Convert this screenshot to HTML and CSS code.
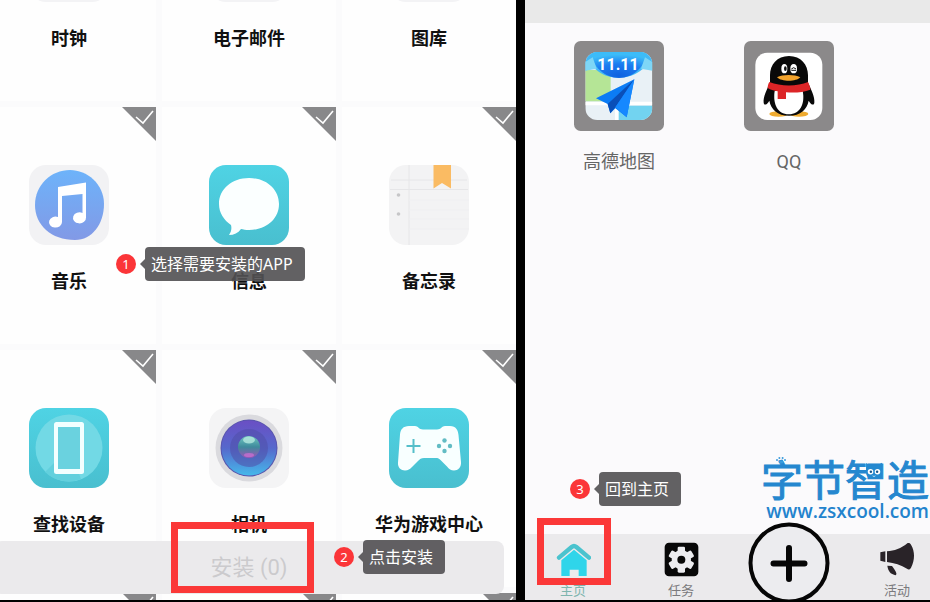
FILE: index.html
```html
<!DOCTYPE html>
<html lang="zh-CN">
<head>
<meta charset="utf-8">
<title>安装应用</title>
<link rel="stylesheet" href="styles.css">
</head>
<body>
<svg class="defs" aria-hidden="true">
  <defs>
    <linearGradient id="blue" x1="0" y1="0" x2="0" y2="1"><stop offset="0" stop-color="#6db3fa"/><stop offset="1" stop-color="#8299e6"/></linearGradient>
    <linearGradient id="teal" x1="0" y1="0" x2="0" y2="1"><stop offset="0" stop-color="#4fd3e4"/><stop offset="1" stop-color="#49bfcf"/></linearGradient>
    <linearGradient id="lens" x1="0" y1="0" x2="0" y2="1"><stop offset="0" stop-color="#6a4fc4"/><stop offset=".5" stop-color="#5668cc"/><stop offset="1" stop-color="#45b8ea"/></linearGradient>
    <linearGradient id="iris" x1="0" y1="0" x2="0" y2="1"><stop offset="0" stop-color="#6fc8c0"/><stop offset=".5" stop-color="#3f8a9c"/><stop offset="1" stop-color="#9a55b8"/></linearGradient>
    <radialGradient id="sky" cx=".5" cy=".9" r=".8"><stop offset="0" stop-color="#0f62e0"/><stop offset=".55" stop-color="#1c7cf0"/><stop offset="1" stop-color="#3cbcf8"/></radialGradient>
    <symbol id="check" viewBox="0 0 34 34"><path d="M14 10l7 6L31 4" fill="none" stroke="#fff" stroke-width="1.6"/></symbol>
    <clipPath id="mapclip"><rect x="46" y="51" width="201" height="204" rx="36"/></clipPath>
  </defs>
</svg>

<main class="stage">
  <section class="picker">
    <div class="grid">
      <label class="app"><span class="mark"><input type="checkbox"><svg><use href="#check"/></svg></span><svg class="icon" viewBox="0 0 80 80"><rect width="80" height="80" rx="17" fill="#f3f3f5"/></svg><span>时钟</span></label>
      <label class="app"><span class="mark"><input type="checkbox"><svg><use href="#check"/></svg></span><svg class="icon" viewBox="0 0 80 80"><rect width="80" height="80" rx="17" fill="#f3f3f5"/></svg><span>电子邮件</span></label>
      <label class="app"><span class="mark"><input type="checkbox"><svg><use href="#check"/></svg></span><svg class="icon" viewBox="0 0 80 80"><rect width="80" height="80" rx="17" fill="#f3f3f5"/></svg><span>图库</span></label>

      <label class="app"><span class="mark"><input type="checkbox"><svg><use href="#check"/></svg></span>
        <svg class="icon" viewBox="0 0 80 80"><rect width="80" height="80" rx="17" fill="#f2f2f4"/><path d="M41 5c17 0 34 14 34 34 0 20-12 36-29 36C22 75 6 60 6 40 6 20 22 5 41 5z" fill="url(#blue)"/><path d="M29 22l28-4.500v35a6.500 5.500 0 1 1-3.500-4.500V29L33 31v26a6.500 5.500 0 1 1-4-5z" fill="#fff"/></svg>
        <span>音乐</span></label>
      <label class="app"><span class="mark"><input type="checkbox"><svg><use href="#check"/></svg></span>
        <svg class="icon" viewBox="0 0 80 80"><rect width="80" height="80" rx="17" fill="url(#teal)"/><path d="M40 13c17 0 30 11 30 26S57 65 40 65c-3 0-6-.5-8-1-3 4-7 6-12 6 2-3 3-6 2-10C15 55 10 48 10 39c0-15 13-26 30-26z" fill="#fbffff"/></svg>
        <span>信息</span></label>
      <label class="app"><span class="mark"><input type="checkbox"><svg><use href="#check"/></svg></span>
        <svg class="icon" viewBox="0 0 80 80"><rect width="80" height="80" rx="17" fill="#f3f3f4"/><path d="M20 0v80M2 15h76M1 24.500h78" stroke="#e6e6e8" fill="none"/><path d="M20 35h60M20 45h60M20 54h60M20 64h60" stroke="#efeff1" fill="none"/><circle cx="9.500" cy="30" r="1.800" fill="#c6c6c8"/><circle cx="9.500" cy="49" r="1.800" fill="#c6c6c8"/><path d="M44.500 0H62v23.500L53 18l-8.500 5.500z" fill="#fabb63"/></svg>
        <span>备忘录</span></label>

      <label class="app"><span class="mark"><input type="checkbox"><svg><use href="#check"/></svg></span>
        <svg class="icon" viewBox="0 0 80 80"><rect width="80" height="80" rx="17" fill="url(#teal)"/><circle cx="40" cy="40" r="33.500" fill="#72d9e5"/><path d="M40 40L16 64a33.500 33.500 0 0 0 36 7z" fill="#62d0dd"/><rect x="25" y="14" width="30" height="52" rx="2.500" fill="#f3ffff"/><rect x="29" y="19" width="22" height="42" fill="#6ad2df"/></svg>
        <span>查找设备</span></label>
      <label class="app"><span class="mark"><input type="checkbox"><svg><use href="#check"/></svg></span>
        <svg class="icon" viewBox="0 0 80 80"><rect width="80" height="80" rx="17" fill="#f4f4f5"/><circle cx="40" cy="40" r="33.500" fill="#dadade"/><circle cx="40" cy="40" r="28.500" fill="#5855ad"/><circle cx="40" cy="40" r="27.500" fill="url(#lens)"/><circle cx="40" cy="40" r="19" fill="#504fa8" opacity=".55"/><circle cx="40" cy="39" r="11" fill="url(#iris)"/><ellipse cx="40" cy="32" rx="6" ry="3.500" fill="#b5e9df" opacity=".8"/><ellipse cx="40" cy="47" rx="5" ry="2" fill="#c66fd0" opacity=".8"/></svg>
        <span>相机</span></label>
      <label class="app"><span class="mark"><input type="checkbox"><svg><use href="#check"/></svg></span>
        <svg class="icon" viewBox="0 0 80 80"><rect width="80" height="80" rx="17" fill="url(#teal)"/><path d="M20 18h6c3 0 4 3.500 8 3.500h14c4 0 5-3.500 8-3.500h5c6 0 8 4 8.500 9l2.500 27c.5 5-3 8.500-7 8.500-3 0-5-1.500-7-4l-6-6c-2-2-3-2.500-5-2.500H35c-3 0-4 1-6 3l-6 6c-2 2-4 3.500-7 3.500-4 0-7.500-3-7-8l2-28c.5-5 3-8.500 9-8.500z" fill="#f8ffff"/><path d="M24.500 31v14M17.500 38h14" stroke="#55bfca" stroke-width="2"/><g fill="#62bcc4"><circle cx="55.500" cy="32.500" r="2.200"/><circle cx="55.500" cy="43" r="2.200"/><circle cx="50" cy="38" r="2.200"/><circle cx="61" cy="38" r="2.200"/></g></svg>
        <span>华为游戏中心</span></label>

      <label class="app"><span class="mark"><input type="checkbox" aria-label="应用"><svg><use href="#check"/></svg></span></label>
      <label class="app"><span class="mark"><input type="checkbox" aria-label="应用"><svg><use href="#check"/></svg></span></label>
      <label class="app"><span class="mark"><input type="checkbox" aria-label="应用"><svg><use href="#check"/></svg></span></label>
    </div>
    <button class="install" type="button">安装 (0)</button>
    <div class="frame frame-install"></div>
    <div class="callout callout-pick"><b>1</b><p>选择需要安装的APP</p></div>
    <div class="callout callout-install"><b>2</b><p>点击安装</p></div>
  </section>

  <section class="home">
    <header class="bar"></header>
    <div class="tiles">
      <a class="tile" href="#">
        <svg viewBox="12 18 270 270"><rect x="12" y="18" width="270" height="270" rx="20" fill="#8b898a"/>
          <g clip-path="url(#mapclip)"><rect x="46" y="51" width="201" height="204" fill="#e9f1f6"/><path d="M46 105h76v94H46z" fill="#b5e596"/><path d="M146 212h101v43H146z" fill="#72d3f0"/><path d="M140 255v-50h107M46 206h80" stroke="#fff" stroke-width="10" fill="none"/><path d="M46 51h201v54c-12-4-22-6-30-2-40 34-104 34-140 0-8-4-18-2-31 4z" fill="#41b9f7"/><path d="M60 51h173c-8 44-44 78-86 78S68 95 60 51z" fill="url(#sky)"/><path d="M46 81l22-14 12 34-34 6zM247 81l-22-14-12 34 34 6z" fill="#7ed6f6"/><path d="M193 133L78 190l35 17 8 28 15-15 34 27z" fill="#0b7cf5"/><path d="M193 133l-80 74 8 28 15-18z" fill="#0a4fb8"/><path d="M193 133l-57 84 34 30z" fill="#1688ff"/></g>
          <text x="144" y="104" class="sale">11.11</text></svg>
        <span>高德地图</span></a>
      <a class="tile" href="#">
        <svg viewBox="12 18 270 270"><rect x="12" y="18" width="270" height="270" rx="20" fill="#8b898a"/><rect x="46" y="53" width="201" height="202" rx="36" fill="#fff"/>
          <ellipse cx="116" cy="237" rx="28" ry="8" fill="#efab2f"/><ellipse cx="177" cy="237" rx="28" ry="8" fill="#efab2f"/>
          <path d="M147 63c36 0 57 26 57 58v22c9 20 21 42 19 60-1 9-9 8-17-6-5 26-24 45-59 45s-54-19-59-45c-8 14-16 15-17 6-2-18 10-40 19-60v-22c0-32 21-58 57-58z" fill="#090909"/><path d="M104 168h84c8 38-8 70-42 70s-48-32-42-70z" fill="#fff"/>
          <path d="M88 141c34 14 84 14 116 0 4 8 7 16 7 23-21 8-45 10-73 8v20h-25v-23c-12-2-22-5-30-10 0-7 2-13 5-18z" fill="#dc2527"/>
          <ellipse cx="133" cy="101" rx="9" ry="14" fill="#fff"/><ellipse cx="136" cy="101" rx="4" ry="7" fill="#111"/><ellipse cx="161" cy="101" rx="10" ry="14" fill="#fff"/><path d="M154 102q7-8 14 0M154 106h14" stroke="#111" stroke-width="3" fill="none"/>
          <path d="M111 127c17-9 53-9 70 0-12 14-57 14-70 0z" fill="#f3a32c"/></svg>
        <span>QQ</span></a>
    </div>
    <div class="brand"><strong>字节智造</strong><span>www.zsxcool.com</span>
      <svg class="paw" viewBox="0 0 30 20" fill="#3a9bdc"><ellipse cx="15" cy="15" rx="6" ry="4"/><circle cx="5" cy="10" r="2.500"/><circle cx="11" cy="5" r="2.500"/><circle cx="19" cy="5" r="2.500"/><circle cx="25" cy="10" r="2.500"/></svg>
      <svg class="cat" viewBox="0 0 52 52"><path d="M3 3l14 8h17L49 2v28c0 12-10 19-23 19S3 42 3 30z" fill="#2489d0"/><circle cx="16" cy="28" r="8" fill="#fff"/><circle cx="36" cy="28" r="8" fill="#fff"/><circle cx="17" cy="28" r="3.500" fill="#17558c"/><circle cx="35" cy="28" r="3.500" fill="#17558c"/><path d="M22 40q4 4 8 0" stroke="#fff" stroke-width="2" fill="none"/></svg>
    </div>
    <nav class="tabs">
      <a class="active" href="#"><svg viewBox="105 305 105 105"><path d="M114 352l38-32q7-6 14 0l38 32" fill="none" stroke="#4bc3ce" stroke-width="13" stroke-linecap="round" stroke-linejoin="round"/><path d="M121 360l38-32 38 32v47h-24v-19h-27v19h-25z" fill="#2fd5ea"/></svg>主页</a>
      <a href="#"><svg viewBox="430 305 105 105"><rect x="432" y="307" width="101" height="101" rx="13" fill="#080808"/><g fill="#ececef"><circle cx="482" cy="358" r="29"/><rect x="471" y="319" width="22" height="78" rx="4"/><rect x="471" y="319" width="22" height="78" rx="4" transform="rotate(60 482 358)"/><rect x="471" y="319" width="22" height="78" rx="4" transform="rotate(120 482 358)"/></g><circle cx="482" cy="358" r="12" fill="#080808"/></svg>任务</a>
      <a class="add" href="#" aria-label="添加"><svg viewBox="0 0 82 82"><circle cx="41" cy="41" r="38.500" fill="#ececef" stroke="#060606" stroke-width="4"/><path d="M41 26v31M25.500 41.500h31" stroke="#060606" stroke-width="6" stroke-linecap="round"/></svg></a>
      <a href="#"><svg viewBox="448 305 105 105" fill="#292328"><path d="M449 336l15-3v32l-15-4zM469 333c22-2 42-8 62-25 5-1 8 1 10 5 12 20 12 46 0 69-3 6-8 7-12 3-18-11-38-17-60-20z"/><path d="M470 376l14 1c6 8 12 16 13 22 1 5-2 7-7 4-9-3-17-8-20-27z"/></svg>活动</a>
    </nav>
    <div class="frame frame-home"></div>
    <div class="callout callout-home"><b>3</b><p>回到主页</p></div>
  </section>
</main>
</body>
</html>
```
FILE: styles.css
```css
* { box-sizing: border-box; }

body {
  margin: 0;
  background: #000;
  font-family: Roboto, "Noto Sans CJK SC", sans-serif;
}

a { color: inherit; text-decoration: none; }

.defs { position: absolute; width: 0; height: 0; }

.stage {
  display: flex;
  gap: 9px;
  height: 100vh;
  padding-bottom: 2px;
}

.picker,
.home {
  position: relative;
  min-width: 0;
}

.picker {
  flex: 516 1 0;
  overflow: hidden;
  background: #fbfbfc;
}

.grid {
  display: grid;
  grid-template-columns: repeat(3, 1fr);
  grid-auto-rows: 237px;
  gap: 6px;
  margin: -136px 0 0 -18px;
}

.app {
  position: relative;
  display: flex;
  flex-direction: column;
  align-items: center;
  gap: 25px;
  padding-top: 58px;
  background: #fefefe;
  color: #111;
  font-size: 18px;
  font-weight: 700;
  line-height: 24px;
}

.icon { width: 80px; height: 80px; }

.mark {
  position: absolute;
  top: 0;
  right: 0;
  width: 34px;
  height: 34px;
}

.mark input {
  appearance: none;
  display: block;
  width: 34px;
  height: 34px;
  margin: 0;
  background: #88888a;
  clip-path: polygon(0 0, 100% 0, 100% 100%);
}

.mark svg {
  position: absolute;
  inset: 0;
  width: 34px;
  height: 34px;
  pointer-events: none;
}

.install {
  position: absolute;
  right: 12px;
  bottom: 6px;
  left: -6px;
  height: 53px;
  padding: 0;
  border: 0;
  border-radius: 8px;
  background: #ebeaec;
  color: #cbcacd;
  font: 22px/53px Roboto, "Noto Sans CJK SC", sans-serif;
}

.frame {
  position: absolute;
  border: 7px solid #fb3838;
}

.frame-install { left: 171px; bottom: 7px; width: 143px; height: 71px; }
.frame-home { left: 12px; bottom: 15px; width: 74px; height: 67px; }

.callout {
  position: absolute;
  display: flex;
  align-items: center;
  gap: 9px;
}

.callout b {
  width: 20px;
  height: 20px;
  border-radius: 50%;
  background: #fb3538;
  color: #fff;
  font: 13px/20px "Noto Sans", sans-serif;
  text-align: center;
}

.callout p {
  position: relative;
  margin: 0;
  padding: 0 12px 0 6px;
  border-radius: 4px;
  background: rgba(82, 81, 84, .91);
  color: #fff;
  font: 16px/34px "Noto Sans", "Noto Sans CJK SC", sans-serif;
  white-space: nowrap;
}

.callout p::before {
  content: "";
  position: absolute;
  top: 12px;
  left: -5px;
  border: solid transparent;
  border-width: 5px 5px 5px 0;
  border-right-color: rgba(82, 81, 84, .91);
}

.callout-pick { left: 116px; top: 247px; }
.callout-install { left: 334px; bottom: 26px; }
.callout-home { left: 45px; bottom: 94px; }

.home {
  flex: 405 1 0;
  display: flex;
  flex-direction: column;
  overflow: hidden;
  background: #fbfafc;
}

.bar { height: 23px; background: #e9e9e9; }

.tiles {
  flex: 1;
  display: grid;
  grid-template-columns: repeat(auto-fill, 170px);
  align-content: start;
  padding: 18px 0 0 9px;
}

.tile {
  display: flex;
  flex-direction: column;
  align-items: center;
  gap: 19px;
  color: #666;
  font-size: 18px;
  line-height: 24px;
}

.tile svg { width: 90px; height: 90px; }

.sale {
  fill: #fff;
  font: 700 48px Roboto, sans-serif;
  text-anchor: middle;
}

.brand {
  position: absolute;
  right: 1px;
  bottom: 77px;
  display: flex;
  flex-direction: column;
  align-items: flex-end;
  color: #2383cd;
}

.brand strong {
  color: #2587cf;
  font: 400 42px/42px "Noto Sans CJK SC", sans-serif;
  -webkit-text-stroke: 1px #2587cf;
}

.brand span {
  font: 600 19px/24px "Open Sans", sans-serif;
}

.paw { position: absolute; left: 14px; top: -1px; width: 12px; height: 8px; }
.cat { position: absolute; left: 104px; top: 5px; width: 18px; height: 18px; }

.tabs {
  display: grid;
  grid-template-columns: repeat(4, 1fr);
  height: 66px;
  margin: 0 -21px 0 -6px;
  background: #ebeaec;
}

.tabs a {
  display: flex;
  flex-direction: column;
  align-items: center;
  gap: 4px;
  padding-top: 8px;
  color: #7b7a7d;
  font-size: 13px;
  line-height: 20px;
}

.tabs .active { color: #7eb5ae; }

.tabs svg { width: 35px; height: 35px; }

.tabs .add { padding: 0; }

.tabs .add svg {
  flex: none;
  width: 82px;
  height: 82px;
  margin-top: -12px;
}
```
